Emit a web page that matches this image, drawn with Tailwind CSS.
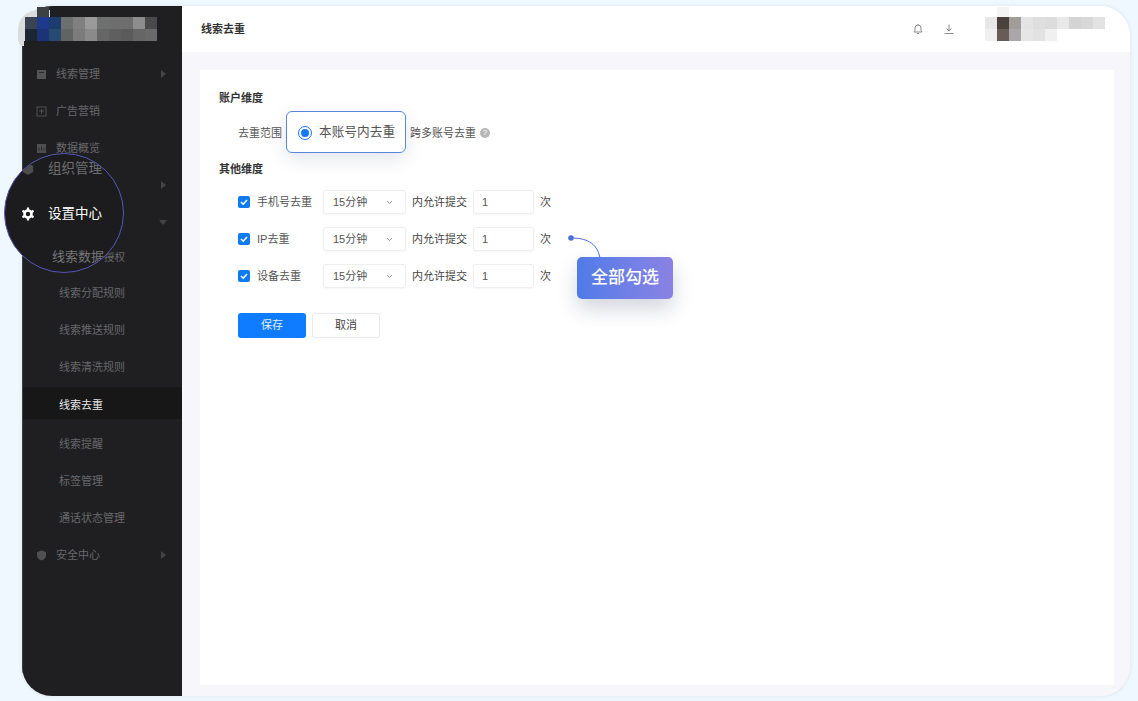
<!DOCTYPE html>
<html>

<head>
  <meta charset="utf-8" />
  <title>线索去重</title>
  <script src="https://cdn.jsdelivr.net/npm/@tailwindcss/browser@4"></script>
</head>

<body class="m-0 overflow-hidden">
  <div class="relative w-[1138px] h-[701px] overflow-hidden bg-[#eef8fe] pt-[6px] pl-[22px] pr-[8px] pb-[5px] font-['Liberation_Sans','Noto_Sans_CJK_SC',sans-serif] text-[11px] text-[#555]">

    <!-- WINDOW -->
    <div class="flex h-full rounded-[30px] overflow-hidden shadow-[0_0_3px_1px_#e2e9f5]">

      <!-- SIDEBAR -->
      <aside class="w-[160px] shrink-0 bg-[#1f1f21] border-l border-[#38424a] text-[#68686a]">
        <div class="h-[49.5px]"></div>
        <div class="h-[37px] flex items-center pl-[13px] pr-[16px]">
          <svg class="w-[11px] h-[11px] mr-[9px]" viewBox="0 0 11 11"><rect x="1" y="1" width="9" height="9" fill="#555557" /><rect x="3" y="3" width="5" height="1" fill="#2a2a2c" /></svg>
          <span class="flex-1">线索管理</span>
          <svg class="w-[5px] h-[8px]" viewBox="0 0 5 8"><path d="M0 0l5 4-5 4z" fill="#444446" /></svg>
        </div>
        <div class="h-[37px] flex items-center pl-[13px] pr-[16px]">
          <svg class="w-[11px] h-[11px] mr-[9px]" viewBox="0 0 11 11" fill="none" stroke="#505052"><rect x="1" y="1" width="9" height="9" /><path d="M3 5h5M5.500 3v5" /></svg>
          <span class="flex-1">广告营销</span>
        </div>
        <div class="h-[37px] flex items-center pl-[13px] pr-[16px]">
          <svg class="w-[11px] h-[11px] mr-[9px]" viewBox="0 0 11 11"><rect x="1" y="1" width="9" height="9" fill="#4e4e50" /><path d="M3 7.500V5M5.500 7.500V3.500M8 7.500V5" stroke="#2a2a2c" /></svg>
          <span class="flex-1">数据概览</span>
        </div>
        <div class="h-[37px] flex items-center justify-end pr-[16px]">
          <svg class="w-[5px] h-[8px]" viewBox="0 0 5 8"><path d="M0 0l5 4-5 4z" fill="#444446" /></svg>
        </div>
        <div class="h-[37px] flex items-center justify-end pr-[15px]">
          <svg class="w-[8px] h-[5px]" viewBox="0 0 8 5"><path d="M0 0h8l-4 5z" fill="#444446" /></svg>
        </div>
        <div class="h-[34px] flex items-center pl-[81px] text-[10.500px]">授权</div>
        <div class="h-[37px] flex items-center pl-[36px]">线索分配规则</div>
        <div class="h-[37px] flex items-center pl-[36px]">线索推送规则</div>
        <div class="h-[37px] flex items-center pl-[36px]">线索清洗规则</div>
        <div class="h-[32px] mt-[1px] mb-[7px] pt-[5px] flex items-center pl-[36px] bg-[#171718] text-[#e8e8e8]">线索去重</div>
        <div class="h-[38px] flex items-center pl-[36px]">线索提醒</div>
        <div class="h-[36px] flex items-center pl-[36px]">标签管理</div>
        <div class="h-[37px] flex items-center pl-[36px]">通话状态管理</div>
        <div class="h-[37px] flex items-center pl-[13px] pr-[16px]">
          <svg class="w-[11px] h-[11px] mr-[9px]" viewBox="0 0 11 11"><path d="M5.500 .5l4.500 1.500v3.500c0 2.500-2 4-4.500 5C3 9.500 1 8 1 5.500V2z" fill="#505052" /></svg>
          <span class="flex-1">安全中心</span>
          <svg class="w-[5px] h-[8px]" viewBox="0 0 5 8"><path d="M0 0l5 4-5 4z" fill="#444446" /></svg>
        </div>
      </aside>

      <!-- MAIN -->
      <main class="flex-1 flex flex-col bg-[#f7f7fb]">
        <header class="h-[46px] shrink-0 bg-white flex items-center pl-[19px] pr-[25px]">
          <span class="flex-1 font-semibold text-[#333]">线索去重</span>
          <svg class="w-[12px] h-[12px] mr-[19px]" viewBox="0 0 12 12" fill="none" stroke="#8a8a8a"><path d="M2 9h8l-1-1.500V5a3 3 0 0 0-6 0v2.500zM5 10.500h2M6 1v1" /></svg>
          <svg class="w-[12px] h-[12px] mr-[30px]" viewBox="0 0 12 12" fill="none" stroke="#8a8a8a"><path d="M6 1.500v6.500M3.500 5.500L6 8l2.500-2.500M1.500 10.500h9" /></svg>
          <div class="w-[120px] h-[24px] grid grid-cols-[repeat(10,12px)] grid-rows-2">
            <i class="bg-[#e6e6e6]"></i><i class="bg-[#4a403d]"></i><i class="bg-[#a09c98]"></i><i class="bg-[#e4e4e4]"></i><i class="bg-[#dedede]"></i><i class="bg-[#dcdcdc]"></i><i class="bg-[#e8e8e8]"></i><i class="bg-[#d4d4d4]"></i><i class="bg-[#d8d8d8]"></i><i class="bg-[#e2e2e2]"></i>
            <i class="bg-[#f0f0f0]"></i><i class="bg-[#675c58]"></i><i class="bg-[#aaa6aa]"></i><i class="bg-[#e6e6e6]"></i><i class="bg-[#e2e2e2]"></i><i class="bg-[#f0f0f0]"></i>
          </div>
        </header>

        <div class="flex-1 pt-[18px] pl-[18px] pr-[16px] pb-[11px]">
          <div class="h-full bg-white pl-[19px] pt-[20px]">
            <h3 class="h-[16px] leading-[16px] font-semibold text-[#333]">账户维度</h3>

            <div class="h-[42px] mt-[5px] flex items-center pl-[19px]">
              <span class="pt-[2px]">去重范围</span>
              <div class="w-[120px] h-[42px] ml-[4px] mr-[4px] pt-[1px] flex items-center pl-[11px] bg-white border border-[#5a85dc] rounded-[6px] shadow-[0_6px_18px_rgba(60,70,110,0.14)] text-[12.700px] text-[#555]">
                <span class="w-[14px] h-[14px] mr-[7px] rounded-full border border-[#1677ff] flex items-center justify-center"><span class="w-[8px] h-[8px] rounded-full bg-[#1677ff]"></span></span>
                本账号内去重
              </div>
              <span class="pt-[2px]">跨多账号去重</span>
              <span class="w-[10px] h-[10px] ml-[4px] mt-[2px] rounded-full bg-[#b8b8b8] text-white text-[8px] leading-[10px] text-center">?</span>
            </div>

            <h3 class="h-[16px] leading-[16px] mt-[8px] font-semibold text-[#333]">其他维度</h3>

            <div class="mt-[13px] flex flex-col gap-[13px] pl-[19px]">
              <div class="h-[24px] flex items-center">
                <span class="w-[12px] h-[12px] rounded-[2px] bg-[#0f7bf0] flex items-center justify-center"><svg class="w-[10px] h-[10px]" viewBox="0 0 10 10" fill="none" stroke="#fff" stroke-width="1.500"><path d="M2 5l2.200 2.200L8 3" /></svg></span>
                <span class="w-[66px] ml-[7px] shrink-0">手机号去重</span>
                <div class="w-[83px] h-[24px] flex items-center justify-between pl-[9px] pr-[12px] border border-[#eeeef2] rounded-[3px] shadow-[0_1px_2px_rgba(0,0,0,0.04)]">15分钟<svg class="w-[7px] h-[5px]" viewBox="0 0 7 5" fill="none" stroke="#999"><path d="M1 1l2.500 2.500L6 1" /></svg></div>
                <span class="ml-[6px] text-[#444]">内允许提交</span>
                <div class="w-[61px] h-[24px] ml-[6px] flex items-center pl-[8px] border border-[#eeeef2] rounded-[3px] shadow-[0_1px_2px_rgba(0,0,0,0.04)]">1</div>
                <span class="ml-[6px] text-[#444]">次</span>
              </div>
              <div class="h-[24px] flex items-center">
                <span class="w-[12px] h-[12px] rounded-[2px] bg-[#0f7bf0] flex items-center justify-center"><svg class="w-[10px] h-[10px]" viewBox="0 0 10 10" fill="none" stroke="#fff" stroke-width="1.500"><path d="M2 5l2.200 2.200L8 3" /></svg></span>
                <span class="w-[66px] ml-[7px] shrink-0">IP去重</span>
                <div class="w-[83px] h-[24px] flex items-center justify-between pl-[9px] pr-[12px] border border-[#eeeef2] rounded-[3px] shadow-[0_1px_2px_rgba(0,0,0,0.04)]">15分钟<svg class="w-[7px] h-[5px]" viewBox="0 0 7 5" fill="none" stroke="#999"><path d="M1 1l2.500 2.500L6 1" /></svg></div>
                <span class="ml-[6px] text-[#444]">内允许提交</span>
                <div class="w-[61px] h-[24px] ml-[6px] flex items-center pl-[8px] border border-[#eeeef2] rounded-[3px] shadow-[0_1px_2px_rgba(0,0,0,0.04)]">1</div>
                <span class="ml-[6px] text-[#444]">次</span>
              </div>
              <div class="h-[24px] flex items-center">
                <span class="w-[12px] h-[12px] rounded-[2px] bg-[#0f7bf0] flex items-center justify-center"><svg class="w-[10px] h-[10px]" viewBox="0 0 10 10" fill="none" stroke="#fff" stroke-width="1.500"><path d="M2 5l2.200 2.200L8 3" /></svg></span>
                <span class="w-[66px] ml-[7px] shrink-0">设备去重</span>
                <div class="w-[83px] h-[24px] flex items-center justify-between pl-[9px] pr-[12px] border border-[#eeeef2] rounded-[3px] shadow-[0_1px_2px_rgba(0,0,0,0.04)]">15分钟<svg class="w-[7px] h-[5px]" viewBox="0 0 7 5" fill="none" stroke="#999"><path d="M1 1l2.500 2.500L6 1" /></svg></div>
                <span class="ml-[6px] text-[#444]">内允许提交</span>
                <div class="w-[61px] h-[24px] ml-[6px] flex items-center pl-[8px] border border-[#eeeef2] rounded-[3px] shadow-[0_1px_2px_rgba(0,0,0,0.04)]">1</div>
                <span class="ml-[6px] text-[#444]">次</span>
              </div>
            </div>

            <div class="mt-[25px] ml-[19px] flex gap-[6px]">
              <button class="w-[68px] h-[25px] bg-[#0f7bff] rounded-[3px] text-white/90">保存</button>
              <button class="w-[68px] h-[25px] bg-white border border-[#e8e8ee] rounded-[3px] text-[#444]">取消</button>
            </div>
          </div>
        </div>
      </main>
    </div>

    <!-- BLURRED LOGO -->
    <div class="absolute left-[18px] top-[10px] w-[32px] h-[31px] bg-[#d8dcde] rounded-tl-[20px]"></div>
    <div class="absolute left-[19px] top-[41px] w-[5px] h-[5px] bg-[#d8dcde] rounded-bl-[4px]"></div>
    <div class="absolute left-[37px] top-[7px] w-[12px] h-[10px] bg-[#3c4244]"></div>
    <div class="absolute left-[25px] top-[17px] w-[132px] h-[24px] grid grid-cols-[repeat(11,12px)] grid-rows-2">
      <i class="bg-[#3b4352]"></i><i class="bg-[#1e3a8e]"></i><i class="bg-[#1d3c6e]"></i><i class="bg-[#6e6f6f]"></i><i class="bg-[#808080]"></i><i class="bg-[#9a9a9a]"></i><i class="bg-[#6f7070]"></i><i class="bg-[#6e6e6e]"></i><i class="bg-[#6e6e6e]"></i><i class="bg-[#8d8d8d]"></i><i class="bg-[#4a4a4a]"></i>
      <i class="bg-[#1c2530]"></i><i class="bg-[#1c3378]"></i><i class="bg-[#264a70]"></i><i class="bg-[#626464]"></i><i class="bg-[#7b7b7b]"></i><i class="bg-[#8a8a8a]"></i><i class="bg-[#666666]"></i><i class="bg-[#5f5f5f]"></i><i class="bg-[#5b5b5b]"></i><i class="bg-[#666666]"></i><i class="bg-[#6a6a6a]"></i>
    </div>
    <div class="absolute left-[997px] top-[7px] w-[12px] h-[10px] bg-[#f4f4f4]"></div>

    <!-- MAGNIFIER -->
    <div class="absolute left-[4px] top-[153px] w-[120px] h-[120px] rounded-full overflow-hidden bg-[#1c1c1e] border border-[#5558b8]">
      <svg class="absolute left-[16px] top-[8px] w-[14px] h-[14px]" viewBox="0 0 14 14"><path d="M7 1l5.200 3v6L7 13l-5.200-3V4z" fill="#4c4c4e" /></svg>
      <span class="absolute left-[43px] top-[5px] text-[13.500px] leading-[20px] whitespace-nowrap text-[#6e6e70]">组织管理</span>
      <svg class="absolute left-[16px] top-[53px] w-[14px] h-[14px]" viewBox="0 0 14 14" fill="none" stroke="#fff">
        <circle cx="7" cy="7" r="3.500" stroke-width="2.600" />
        <path d="M7 .6v2.400M7 11v2.400M1.500 3.800l2 1.200M10.500 9l2 1.200M1.500 10.200l2-1.200M10.500 5l2-1.200" stroke-width="2.200" />
      </svg>
      <span class="absolute left-[43px] top-[50px] text-[13.500px] leading-[20px] whitespace-nowrap text-white">设置中心</span>
      <span class="absolute left-[47px] top-[93px] text-[13px] leading-[20px] whitespace-nowrap text-[#77777a]">线索数据</span>
    </div>

    <!-- CALLOUT -->
    <svg class="absolute left-[566px] top-[232px] w-[40px] h-[28px]" viewBox="0 0 40 28" fill="none"><circle cx="5" cy="6" r="2.800" fill="#4c6fd8" /><path d="M5 6c14 0 26 4 29 20" stroke="#4c6fd8" /></svg>
    <div class="absolute left-[577px] top-[257px] w-[96px] h-[42px] flex items-center justify-center rounded-[5px] bg-gradient-to-r from-[#4f7be8] to-[#8a82e4] text-white text-[17px] font-medium shadow-[0_10px_20px_rgba(60,70,110,0.22)]">全部勾选</div>
  </div>
</body>

</html>
